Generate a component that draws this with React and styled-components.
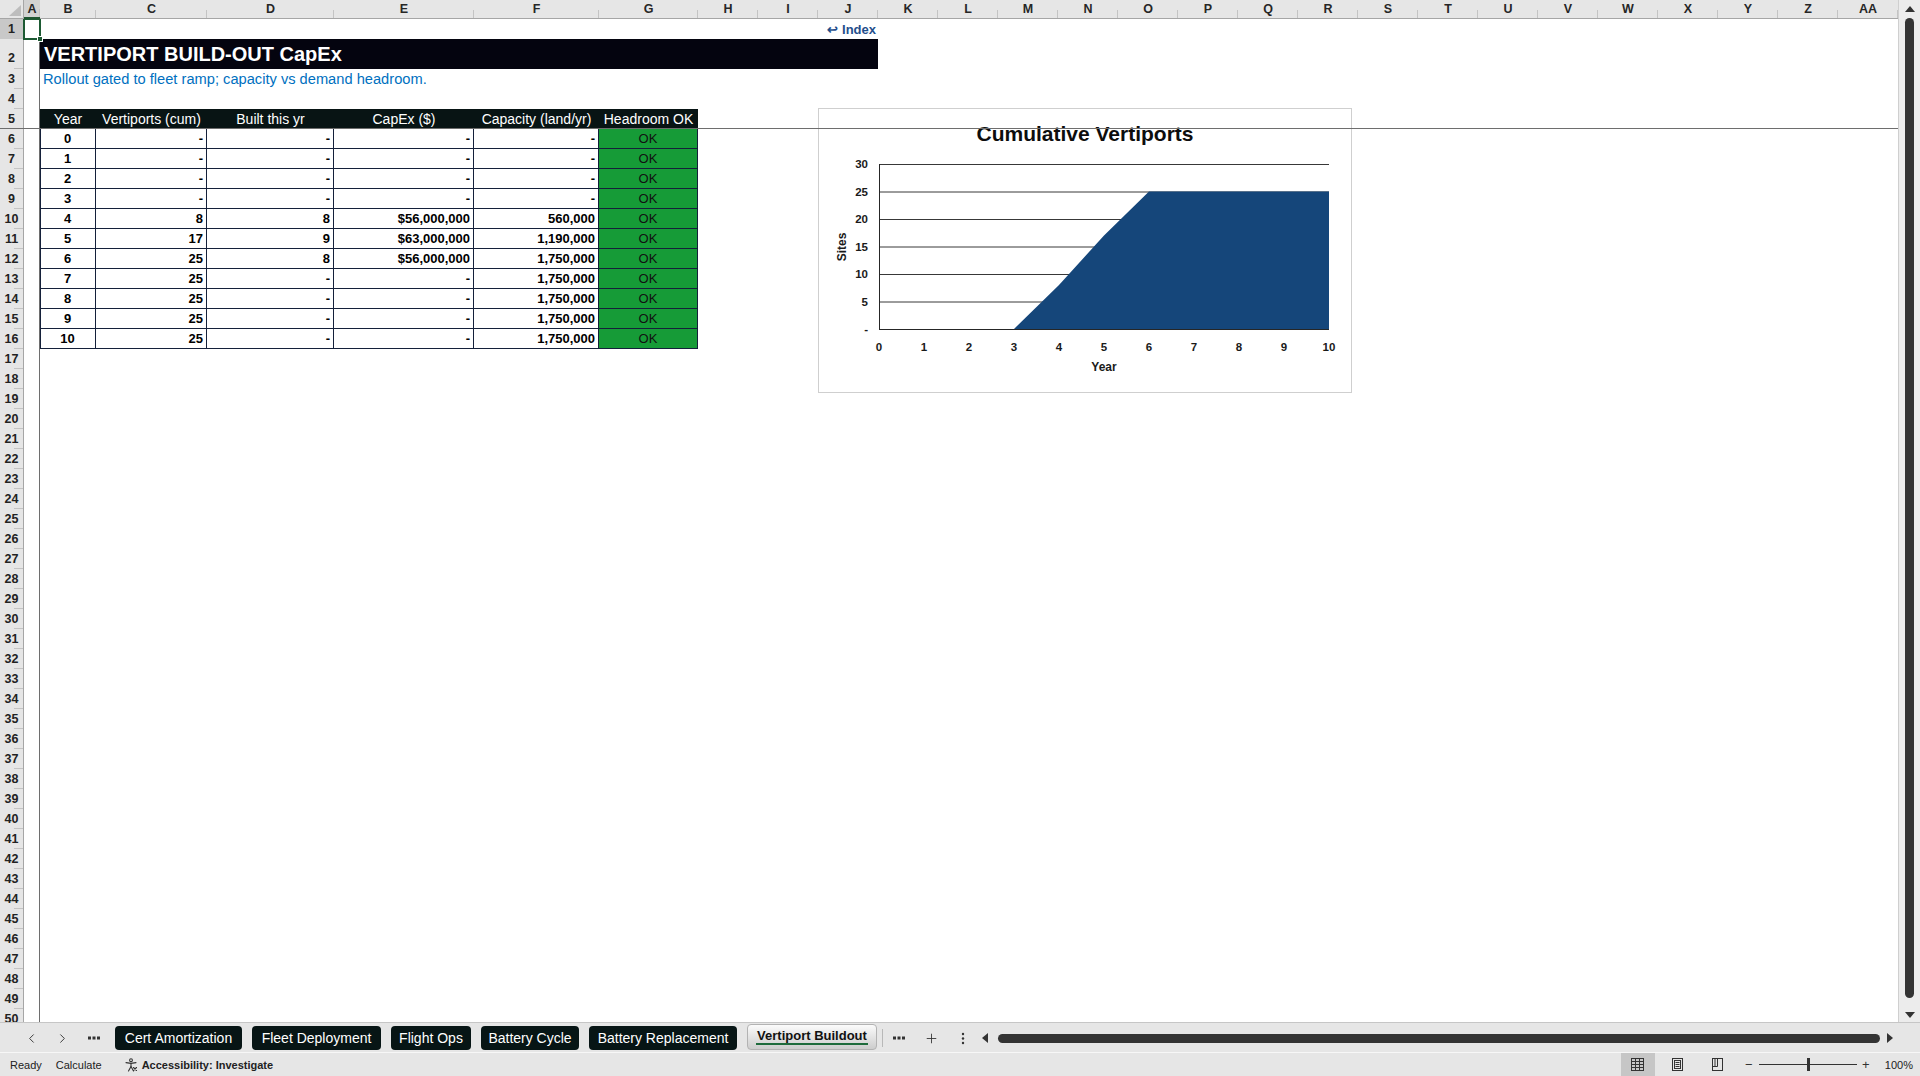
import React from "react";
import styled, { createGlobalStyle } from "styled-components";
import { ChevronLeft, ChevronRight, Plus } from "lucide-react";

const GlobalStyle = createGlobalStyle`
  html, body { margin: 0; padding: 0; width: 1920px; height: 1076px; overflow: hidden; background: #fff; }
  body { font-family: "Liberation Sans", Arial, sans-serif; }
  #root { width: 1920px; height: 1076px; }
  *, *::before, *::after { box-sizing: border-box; }
`;

const COL_TEMPLATE = "24px 16px 56px 111px 127px 140px 125px 99px repeat(20, 60px)";
const LETTERS = ["A","B","C","D","E","F","G","H","I","J","K","L","M","N","O","P","Q","R","S","T","U","V","W","X","Y","Z","AA"];
const BORDER = "#14203a";

const HEADERS = ["Year", "Vertiports (cum)", "Built this yr", "CapEx ($)", "Capacity (land/yr)", "Headroom OK"];
const ROWS = [
  ["0", "-", "-", "-", "-"],
  ["1", "-", "-", "-", "-"],
  ["2", "-", "-", "-", "-"],
  ["3", "-", "-", "-", "-"],
  ["4", "8", "8", "$56,000,000", "560,000"],
  ["5", "17", "9", "$63,000,000", "1,190,000"],
  ["6", "25", "8", "$56,000,000", "1,750,000"],
  ["7", "25", "-", "-", "1,750,000"],
  ["8", "25", "-", "-", "1,750,000"],
  ["9", "25", "-", "-", "1,750,000"],
  ["10", "25", "-", "-", "1,750,000"],
];
const SERIES = [0, 0, 0, 0, 8, 17, 25, 25, 25, 25, 25];

const TABS = [
  { name: "Cert Amortization", w: 127 },
  { name: "Fleet Deployment", w: 129 },
  { name: "Flight Ops", w: 80 },
  { name: "Battery Cycle", w: 98 },
  { name: "Battery Replacement", w: 148 },
  { name: "Vertiport Buildout", w: 130, active: true },
];

/* ---------- frame ---------- */
const Frame = styled.div`
  width: 1920px;
  height: 1076px;
  display: flex;
  flex-direction: column;
  background: #fff;
  overflow: hidden;
  font-family: "Liberation Sans", Arial, sans-serif;
`;
const Workspace = styled.div`
  display: flex;
  height: 1022px;
  flex: none;
`;
const Grid = styled.div`
  width: 1898px;
  display: flex;
  flex-direction: column;
  overflow: hidden;
`;

/* ---------- column header ---------- */
const HeaderRow = styled.div`
  display: grid;
  grid-template-columns: ${COL_TEMPLATE};
  height: 19px;
  flex: none;
`;
const Corner = styled.div`
  position: relative;
  background: #e6e6e6;
  border-bottom: 1px solid #a6a6a6;
  border-right: 1px solid #a6a6a6;
  &::after {
    content: "";
    position: absolute;
    right: 2px;
    bottom: 2px;
    width: 0;
    height: 0;
    border-left: 12px solid transparent;
    border-bottom: 11px solid #bdbdbd;
  }
`;
const ColHead = styled.div`
  position: relative;
  display: flex;
  align-items: center;
  justify-content: center;
  background: ${(p) => (p.$active ? "#d2d2d2" : "#e6e6e6")};
  border-bottom: ${(p) => (p.$active ? "2px solid #1e5631" : "1px solid #a6a6a6")};
  font-size: 12.5px;
  font-weight: bold;
  color: #262626;
  &::after {
    content: "";
    position: absolute;
    right: 0;
    bottom: 0;
    width: 1px;
    height: 8px;
    background: #c4c4c4;
  }
`;

/* ---------- sheet body ---------- */
const Body = styled.div`
  position: relative;
  flex: 1;
  min-height: 0;
  overflow: hidden;
`;
const SheetRow = styled.div`
  display: grid;
  grid-template-columns: ${COL_TEMPLATE};
  height: ${(p) => p.$h}px;
`;
const RowHead = styled.div`
  grid-column: 1;
  position: relative;
  display: flex;
  justify-content: center;
  align-items: ${(p) => (p.$tall ? "flex-end" : "center")};
  padding-bottom: ${(p) => (p.$tall ? "4px" : "0")};
  background: ${(p) => (p.$active ? "#c8c8c8" : "#e6e6e6")};
  border-right: 1px solid #a6a6a6;
  font-size: 12.5px;
  font-weight: bold;
  color: #222;
  &::after {
    content: "";
    position: absolute;
    right: 0;
    bottom: 0;
    width: 9px;
    height: 1px;
    background: #c4c4c4;
  }
`;
const ActiveCell = styled.div`
  grid-column: 2;
  position: relative;
  z-index: 3;
  &::before {
    content: "";
    position: absolute;
    left: -1px;
    top: -1px;
    right: -1px;
    bottom: -1px;
    border: 2px solid #1d5a33;
  }
  &::after {
    content: "";
    position: absolute;
    right: -3px;
    bottom: -3px;
    width: 6px;
    height: 6px;
    background: #1d5a33;
    border: 1px solid #fff;
  }
`;
const IndexLink = styled.div`
  grid-column: 11;
  display: flex;
  align-items: center;
  justify-content: flex-end;
  padding-right: 2px;
  font-size: 13px;
  font-weight: bold;
  color: #1f4e8c;
  white-space: nowrap;
`;
const TitleBar = styled.div`
  grid-column: 3 / 12;
  display: flex;
  align-items: center;
  padding-left: 4px;
  background: #04040f;
  color: #fff;
  font-size: 20px;
  font-weight: bold;
  white-space: nowrap;
`;
const Subtitle = styled.div`
  grid-column: 3 / 12;
  display: flex;
  align-items: center;
  padding-left: 3px;
  color: #0070c0;
  font-size: 14.67px;
  white-space: nowrap;
`;
const HeadCell = styled.div`
  grid-column: ${(p) => p.$col};
  display: flex;
  align-items: center;
  justify-content: center;
  background: #081414;
  color: #fff;
  font-size: 14px;
  white-space: nowrap;
  border-bottom: 1px solid ${BORDER};
`;
const DataCell = styled.div`
  grid-column: ${(p) => p.$col};
  display: flex;
  align-items: center;
  justify-content: ${(p) => (p.$center ? "center" : "flex-end")};
  padding: 0 3px 0 2px;
  font-size: 13px;
  font-weight: bold;
  color: #000;
  white-space: nowrap;
  background: #fff;
  border-right: 1px solid ${BORDER};
  border-bottom: 1px solid ${BORDER};
  border-left: ${(p) => (p.$first ? `1px solid ${BORDER}` : "none")};
`;
const OkCell = styled.div`
  grid-column: ${(p) => p.$col};
  display: flex;
  align-items: center;
  justify-content: center;
  background: #169b37;
  color: #111;
  font-size: 13px;
  border-right: 1px solid ${BORDER};
  border-bottom: 1px solid ${BORDER};
`;
const FreezeH = styled.div`
  position: absolute;
  left: 0;
  right: 0;
  top: 109px;
  height: 1px;
  background: #6e6e6e;
  z-index: 2;
`;
const FreezeV = styled.div`
  position: absolute;
  top: 0;
  bottom: 0;
  left: 39px;
  width: 1px;
  background: #6e6e6e;
  z-index: 2;
`;

/* ---------- chart ---------- */
const ChartFrame = styled.div`
  position: absolute;
  left: 818px;
  top: 89px;
  width: 534px;
  height: 285px;
  background: #fff;
  border: 1px solid #cfcfcf;
  z-index: 1;
`;

/* ---------- vertical scrollbar ---------- */
const VScroll = styled.div`
  width: 22px;
  flex: none;
  display: flex;
  flex-direction: column;
  align-items: center;
  background: #ececec;
  border-left: 1px solid #cfcfcf;
`;
const ArrowBox = styled.div`
  height: ${(p) => p.$h}px;
  display: flex;
  justify-content: center;
  align-items: ${(p) => (p.$down ? "flex-end" : "center")};
  padding-bottom: ${(p) => (p.$down ? "4px" : "0")};
  &::before {
    content: "";
    border-left: 5px solid transparent;
    border-right: 5px solid transparent;
    ${(p) => (p.$down ? "border-top: 6px solid #333;" : "border-bottom: 6px solid #333;")}
  }
`;
const VThumb = styled.div`
  flex: 1;
  width: 9px;
  background: #333;
  border-radius: 5px;
`;

/* ---------- tab bar ---------- */
const TabBar = styled.div`
  height: 30px;
  flex: none;
  display: flex;
  align-items: flex-start;
  background: #e6e6e6;
  border-top: 1px solid #c6c6c6;
  padding-left: 16px;
`;
const NavBtn = styled.div`
  width: 31px;
  height: 24px;
  margin-top: 3px;
  display: flex;
  align-items: center;
  justify-content: center;
  color: #333;
`;
const Tabs = styled.div`
  display: flex;
  gap: 10px;
  margin-left: 6px;
  margin-top: 3px;
`;
const Tab = styled.div`
  position: relative;
  width: ${(p) => p.$w}px;
  border-radius: 4px;
  display: flex;
  align-items: center;
  justify-content: center;
  white-space: nowrap;
  font-size: ${(p) => (p.$active ? "13px" : "14px")};
  font-weight: ${(p) => (p.$active ? "bold" : "normal")};
  color: ${(p) => (p.$active ? "#111" : "#fff")};
  background: ${(p) => (p.$active ? "linear-gradient(#fbfbfb, #cdcdcd)" : "#071515")};
  border: ${(p) => (p.$active ? "1px solid #b3b3b3" : "none")};
  margin-top: ${(p) => (p.$active ? "-2px" : "0")};
  padding-bottom: ${(p) => (p.$active ? "3px" : "0")};
  height: ${(p) => (p.$active ? "26px" : "24px")};
  &::after {
    content: "";
    display: ${(p) => (p.$active ? "block" : "none")};
    position: absolute;
    left: 8px;
    right: 8px;
    bottom: 4px;
    height: 2px;
    background: #1e6b3c;
  }
`;
const TabSep = styled.div`
  width: 1px;
  height: 18px;
  margin: 6px 0 0 5px;
  background: #b8b8b8;
`;
const ToolBtn = styled.div`
  width: 32px;
  height: 24px;
  margin-top: 3px;
  display: flex;
  align-items: center;
  justify-content: center;
  color: #333;
`;
const HScroll = styled.div`
  flex: 1;
  height: 24px;
  margin-top: 3px;
  display: flex;
  align-items: center;
  padding-right: 24px;
`;
const HArrow = styled.div`
  width: 12px;
  display: flex;
  justify-content: center;
  &::before {
    content: "";
    border-top: 5px solid transparent;
    border-bottom: 5px solid transparent;
    ${(p) => (p.$right ? "border-left: 6px solid #333;" : "border-right: 6px solid #333;")}
  }
`;
const HThumb = styled.div`
  flex: 1;
  height: 9px;
  margin: 0 4px 0 7px;
  background: #333;
  border-radius: 5px;
`;

/* ---------- status bar ---------- */
const StatusBar = styled.div`
  height: 24px;
  flex: none;
  display: flex;
  align-items: center;
  background: #e6e6e6;
  border-top: 1px solid #f7f7f7;
  padding: 0 7px 0 10px;
  font-size: 11px;
  color: #222;
`;
const StatusText = styled.span`
  margin-left: ${(p) => p.$ml || 0}px;
  font-weight: ${(p) => (p.$bold ? "bold" : "normal")};
  white-space: nowrap;
`;
const StatusIcon = styled.span`
  display: flex;
  margin-left: 22px;
  width: 14px;
  height: 14px;
`;
const RightGroup = styled.div`
  margin-left: auto;
  display: flex;
  align-items: center;
  height: 100%;
`;
const ViewBtn = styled.div`
  width: 34px;
  height: 100%;
  margin-left: ${(p) => (p.$first ? 0 : 6)}px;
  display: flex;
  align-items: center;
  justify-content: center;
  background: ${(p) => (p.$active ? "#c6c6c6" : "transparent")};
`;
const ZoomSign = styled.span`
  width: 10px;
  margin-left: ${(p) => p.$ml}px;
  text-align: center;
  font-size: 13px;
  color: #333;
`;
const ZoomTrack = styled.div`
  position: relative;
  width: 98px;
  height: 1px;
  margin-left: 5px;
  background: #333;
  &::after {
    content: "";
    position: absolute;
    left: 48px;
    top: -6px;
    width: 3px;
    height: 13px;
    background: #333;
  }
`;

/* ---------- components ---------- */
function Chart() {
  const X0 = 60, DX = 45, Y0 = 220, DY = 5.5;
  const pts = SERIES.map((v, i) => `${X0 + DX * i},${Y0 - DY * v}`).join(" ");
  const area = `${X0},${Y0} ${pts} ${X0 + DX * 10},${Y0}`;
  const ticks = [0, 5, 10, 15, 20, 25, 30];
  const font = "Liberation Sans, Arial, sans-serif";
  return (
    <svg width="532" height="283" viewBox="0 0 532 283">
      <text x="266" y="32" textAnchor="middle" fontFamily={font} fontWeight="bold" fontSize="21" fill="#0d0d0d">
        Cumulative Vertiports
      </text>
      {ticks.slice(1).map((t) => (
        <line key={t} x1={X0} x2={X0 + DX * 10} y1={Y0 - DY * t + 0.5} y2={Y0 - DY * t + 0.5} stroke="#383838" strokeWidth="1" />
      ))}
      <polygon points={area} fill="#15467a" />
      <line x1={X0 + 0.5} x2={X0 + 0.5} y1={Y0 - DY * 30} y2={Y0 + 0.5} stroke="#262626" strokeWidth="1" />
      <line x1={X0} x2={X0 + DX * 10} y1={Y0 + 0.5} y2={Y0 + 0.5} stroke="#262626" strokeWidth="1" />
      {ticks.map((t) => (
        <text key={t} x="49" y={Y0 - DY * t + 4} textAnchor="end" fontFamily={font} fontWeight="bold" fontSize="11.5" fill="#1a1a1a">
          {t === 0 ? "-" : t}
        </text>
      ))}
      {SERIES.map((_, i) => (
        <text key={i} x={X0 + DX * i} y="242" textAnchor="middle" fontFamily={font} fontWeight="bold" fontSize="11.5" fill="#1a1a1a">
          {i}
        </text>
      ))}
      <text x="285" y="262" textAnchor="middle" fontFamily={font} fontWeight="bold" fontSize="12" fill="#1a1a1a">
        Year
      </text>
      <text x="27" y="138" textAnchor="middle" transform="rotate(-90 27 138)" fontFamily={font} fontWeight="bold" fontSize="12" fill="#1a1a1a">
        Sites
      </text>
    </svg>
  );
}

function RowContent({ r }) {
  if (r === 1) {
    return (
      <>
        <ActiveCell />
        <IndexLink>↩ Index</IndexLink>
      </>
    );
  }
  if (r === 2) return <TitleBar>VERTIPORT BUILD-OUT CapEx</TitleBar>;
  if (r === 3) return <Subtitle>Rollout gated to fleet ramp; capacity vs demand headroom.</Subtitle>;
  if (r === 5) {
    return HEADERS.map((h, i) => (
      <HeadCell key={h} $col={3 + i}>{h}</HeadCell>
    ));
  }
  if (r >= 6 && r <= 16) {
    const row = ROWS[r - 6];
    return (
      <>
        {row.map((v, i) => (
          <DataCell key={i} $col={3 + i} $first={i === 0} $center={i === 0}>
            {v}
          </DataCell>
        ))}
        <OkCell $col={8}>OK</OkCell>
      </>
    );
  }
  return null;
}

function GridIcon() {
  return (
    <svg width="15" height="15" viewBox="0 0 15 15" fill="none" stroke="#333" strokeWidth="1">
      <rect x="1.5" y="1.5" width="12" height="12" />
      <line x1="5.5" y1="1.5" x2="5.5" y2="13.5" />
      <line x1="9.5" y1="1.5" x2="9.5" y2="13.5" />
      <line x1="1.5" y1="4.5" x2="13.5" y2="4.5" />
      <line x1="1.5" y1="7.5" x2="13.5" y2="7.5" />
      <line x1="1.5" y1="10.5" x2="13.5" y2="10.5" />
    </svg>
  );
}
function PageIcon() {
  return (
    <svg width="15" height="15" viewBox="0 0 15 15" fill="none" stroke="#333" strokeWidth="1">
      <rect x="2.5" y="1.5" width="10" height="12" />
      <rect x="4.5" y="3.5" width="6" height="8" />
      <line x1="5.5" y1="5.5" x2="9.5" y2="5.5" />
      <line x1="5.5" y1="7.5" x2="9.5" y2="7.5" />
      <line x1="5.5" y1="9.5" x2="9.5" y2="9.5" />
    </svg>
  );
}
function BreakIcon() {
  return (
    <svg width="15" height="15" viewBox="0 0 15 15" fill="none" stroke="#333" strokeWidth="1">
      <rect x="2.5" y="1.5" width="10" height="12" />
      <line x1="7.5" y1="1.5" x2="7.5" y2="9.5" />
      <line x1="2.5" y1="9.5" x2="7.5" y2="9.5" />
      <line x1="5" y1="1.5" x2="5" y2="9.5" />
    </svg>
  );
}
function AccessIcon() {
  return (
    <svg width="14" height="14" viewBox="0 0 14 14" fill="none" stroke="#333" strokeWidth="1.1" strokeLinecap="round">
      <circle cx="7" cy="2.2" r="1.4" />
      <path d="M2 4.6 L7 5.4 L12 4.6" />
      <path d="M7 5.4 L7 8.6 L4.5 13" />
      <path d="M7 8.6 L9.5 13" />
      <path d="M9.5 9.5 L12.5 12.5 M12.5 9.5 L9.5 12.5" />
    </svg>
  );
}
function DotsH() {
  return (
    <svg width="12" height="4" viewBox="0 0 12 4">
      <rect x="0" y="0.5" width="3" height="3" fill="#333" />
      <rect x="4.5" y="0.5" width="3" height="3" fill="#333" />
      <rect x="9" y="0.5" width="3" height="3" fill="#333" />
    </svg>
  );
}
function DotsV() {
  return (
    <svg width="4" height="13" viewBox="0 0 4 13">
      <circle cx="2" cy="2" r="1.2" fill="#333" />
      <circle cx="2" cy="6.5" r="1.2" fill="#333" />
      <circle cx="2" cy="11" r="1.2" fill="#333" />
    </svg>
  );
}

export default function App() {
  const rows = Array.from({ length: 50 }, (_, i) => i + 1);
  return (
    <Frame>
      <GlobalStyle />
      <Workspace>
        <Grid>
          <HeaderRow>
            <Corner />
            {LETTERS.map((l) => (
              <ColHead key={l} $active={l === "A"}>{l}</ColHead>
            ))}
          </HeaderRow>
          <Body>
            {rows.map((r) => (
              <SheetRow key={r} $h={r === 2 ? 30 : 20}>
                <RowHead $tall={r === 2} $active={r === 1}>{r}</RowHead>
                <RowContent r={r} />
              </SheetRow>
            ))}
            <ChartFrame>
              <Chart />
            </ChartFrame>
            <FreezeH />
            <FreezeV />
          </Body>
        </Grid>
        <VScroll>
          <ArrowBox $h={18} />
          <VThumb />
          <ArrowBox $h={24} $down />
        </VScroll>
      </Workspace>
      <TabBar>
        <NavBtn><ChevronLeft size={15} strokeWidth={1.5} /></NavBtn>
        <NavBtn><ChevronRight size={15} strokeWidth={1.5} /></NavBtn>
        <NavBtn><DotsH /></NavBtn>
        <Tabs>
          {TABS.map((t) => (
            <Tab key={t.name} $w={t.w} $active={t.active}>{t.name}</Tab>
          ))}
        </Tabs>
        <TabSep />
        <ToolBtn><DotsH /></ToolBtn>
        <ToolBtn><Plus size={15} strokeWidth={1.4} /></ToolBtn>
        <ToolBtn><DotsV /></ToolBtn>
        <HScroll>
          <HArrow />
          <HThumb />
          <HArrow $right />
        </HScroll>
      </TabBar>
      <StatusBar>
        <StatusText>Ready</StatusText>
        <StatusText $ml={14}>Calculate</StatusText>
        <StatusIcon><AccessIcon /></StatusIcon>
        <StatusText $ml={4} $bold>Accessibility: Investigate</StatusText>
        <RightGroup>
          <ViewBtn $first $active><GridIcon /></ViewBtn>
          <ViewBtn><PageIcon /></ViewBtn>
          <ViewBtn><BreakIcon /></ViewBtn>
          <ZoomSign $ml={9}>−</ZoomSign>
          <ZoomTrack />
          <ZoomSign $ml={4}>+</ZoomSign>
          <StatusText $ml={14}>100%</StatusText>
        </RightGroup>
      </StatusBar>
    </Frame>
  );
}
